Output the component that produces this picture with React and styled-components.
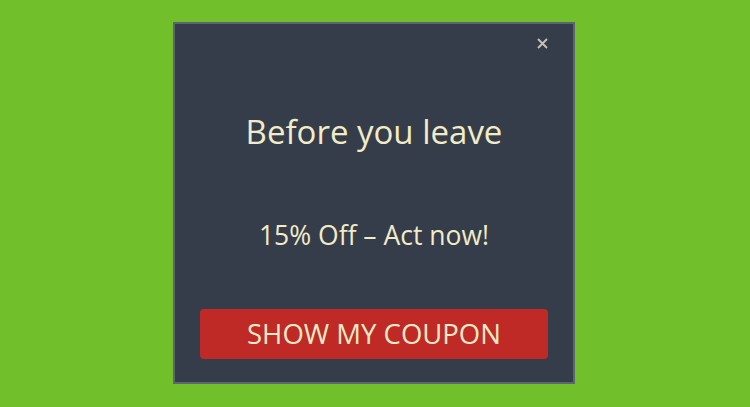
import React from "react";
import styled, { createGlobalStyle } from "styled-components";

const GlobalStyle = createGlobalStyle`
	html, body {
		margin: 0;
		padding: 0;
		background: #71bf2b;
	}
	body {
		font-family: "Open Sans", "Liberation Sans", sans-serif;
	}
`;

const Page = styled.main`
	display: flex;
	justify-content: center;
	align-items: center;
	width: 750px;
	height: 407px;
`;

const Popup = styled.section`
	position: relative;
	box-sizing: border-box;
	display: flex;
	flex-direction: column;
	align-items: center;
	width: 402px;
	height: 362px;
	margin-top: -2px;
	margin-left: -2px;
	padding: 86px 25px 23px;
	background: #353c4a;
	border: 2px solid #5d6573;
	color: #f1ebc6;
`;

const CloseButton = styled.button`
	position: absolute;
	top: 12px;
	right: 23px;
	width: 16px;
	height: 16px;
	padding: 0;
	border: 0;
	background: none;
	cursor: pointer;
	display: flex;
	align-items: center;
	justify-content: center;
`;

const Title = styled.h2`
	margin: 0;
	font-size: 33px;
	line-height: 44px;
	font-weight: 400;
`;

const Offer = styled.p`
	margin: 63px 0 0;
	font-size: 26.5px;
	line-height: 36px;
	font-weight: 400;
`;

const CouponButton = styled.button`
	margin-top: auto;
	width: 100%;
	height: 50px;
	border: 0;
	border-radius: 4px;
	background: #bf2926;
	color: #f1ebc6;
	font-family: inherit;
	font-size: 27.5px;
	font-weight: 400;
	text-transform: uppercase;
	cursor: pointer;
`;

const App = () => {
	return (
		<>
			<GlobalStyle />
			<Page>
				<Popup>
					<CloseButton aria-label="Close">
						<svg width="11" height="11" viewBox="0 0 11 11">
							<path d="M1 1L10 10M10 1L1 10" stroke="#c4c3b4" strokeWidth="1.9" />
						</svg>
					</CloseButton>
					<Title>Before you leave</Title>
					<Offer>15% Off – Act now!</Offer>
					<CouponButton>Show my coupon</CouponButton>
				</Popup>
			</Page>
		</>
	);
};

export default App;
